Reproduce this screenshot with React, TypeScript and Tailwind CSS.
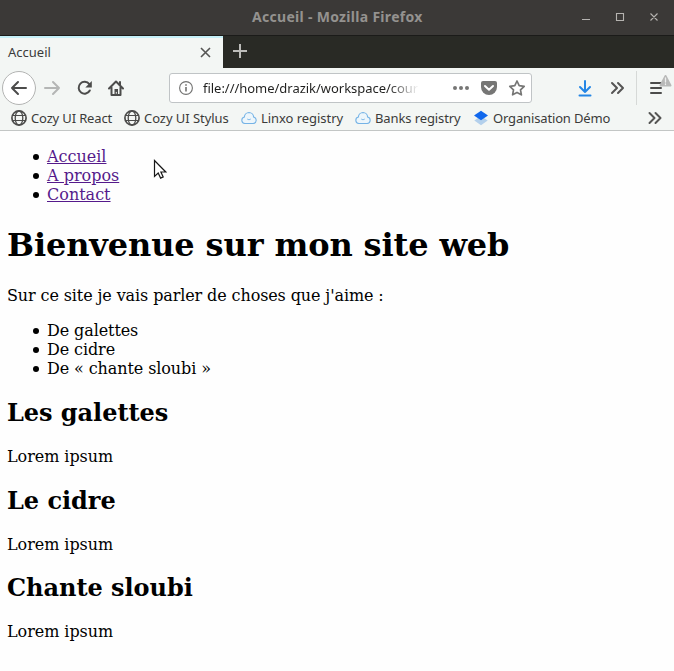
import type { ReactNode } from "react";

function Globe() {
  return (
    <svg width="16" height="16" viewBox="0 0 16 16" fill="none" stroke="#4c4c4b" className="shrink-0">
      <circle cx="8" cy="8" r="7.1" strokeWidth="1.7" />
      <ellipse cx="8" cy="8" rx="3.8" ry="7" strokeWidth="1.3" />
      <path d="M1.5 5.5h13M1.5 10.5h13" strokeWidth="1.2" />
    </svg>
  );
}

function Cloud() {
  return (
    <svg width="16" height="16" viewBox="0 0 16 16" fill="none" stroke="#75b3e6" strokeLinecap="round" className="shrink-0">
      <path d="M3.8 13.500a3.300 3.300 0 0 1-.4-6.500A4.700 4.700 0 0 1 8 2.500a4.700 4.700 0 0 1 4.600 4.500 3.300 3.300 0 0 1-.4 6.500z" fill="#edf6fb" strokeWidth="1.1" />
      <path d="M6.500 9.300q1.500 1.300 3 0" strokeWidth=".9" />
    </svg>
  );
}

function Layers() {
  return (
    <svg width="16" height="16" viewBox="0 0 16 16" className="shrink-0">
      <path d="M1.300 10.500 8 6l6.700 4.500L8 15.300z" fill="#b3d0ec" />
      <path d="M1 5.500 8 .8l7 4.700-7 4.800z" fill="#1168ed" />
    </svg>
  );
}

function Chevrons() {
  return (
    <svg width="14" height="14" viewBox="0 0 14 14" fill="none" stroke="#555554" strokeWidth="2" strokeLinecap="round" strokeLinejoin="round" className="shrink-0">
      <path d="m1.500 2 5 5-5 5M7.500 2l5 5-5 5" />
    </svg>
  );
}

function Bookmark({ icon, width, label }: { icon: ReactNode; width: string; label: ReactNode }) {
  return (
    <div className={`flex shrink-0 items-center gap-1 ${width}`}>
      {icon}
      {label}
    </div>
  );
}

function TitleBar() {
  return (
    <div className="flex h-[35px] items-center bg-[#3b3937]">
      <div className="w-[252px]" />
      <div className="w-[328px] pb-[2px] whitespace-nowrap text-[14px] font-bold tracking-[0.3px] text-[#94928f]">Accueil - Mozilla Firefox</div>
      <svg width="94" height="35" fill="none" stroke="#b5b3b0" strokeWidth="1.1">
        <path d="M2 19.500h8M36.500 13.500h7v7h-7zM70.500 13.500l7 7m0-7-7 7" />
      </svg>
    </div>
  );
}

function Tabs() {
  return (
    <div className="flex h-[33px] border-t border-[#1b1b19] bg-[#292a25]">
      <div className="flex h-8 w-[223px] items-center justify-between border-t-2 border-[#c5eff7] bg-[#f3f6f4] pr-3 pb-[2px] pl-2">
        <span className="pt-[2px] text-[13px]">Accueil</span>
        <svg width="11" height="11" viewBox="0 0 11 11" stroke="#555554" strokeWidth="1.6">
          <path d="m1 1 9 9m0-9-9 9" />
        </svg>
      </div>
      <svg width="34" height="31" stroke="#bcbcb9" strokeWidth="2">
        <path d="M10 15h14M17 8v14" />
      </svg>
    </div>
  );
}

function NavBar() {
  return (
    <div className="flex h-10 items-center bg-[#f3f6f4]">
      <svg width="169" height="40" fill="none" stroke="#4c4c4b" strokeWidth="2" strokeLinecap="round" strokeLinejoin="round" className="shrink-0">
        <circle cx="19" cy="20" r="16.500" fill="#fff" stroke="#b3b4b3" strokeWidth="1" />
        <path d="M26 20H12m6-6-6 6 6 6" />
        <path d="M45 20h14m-6-6 6 6-6 6" stroke="#b4b6b5" />
        <path d="M89.300 16.200A5.900 5.900 0 1 0 89.800 22.500" />
        <path d="M91.800 13v6.500h-6.500z" fill="#4c4c4b" stroke="none" />
        <path d="m109 20.500 7-7 7 7M111.500 19.500v7.500h9v-7.500M120 14v3" />
        <path d="M114.500 21h3.500v6h-3.500z" fill="#4c4c4b" stroke="none" />
        <path d="M116.300 24.300v1" stroke="#f3f6f4" strokeWidth="1" />
      </svg>
      <div className="flex h-[30px] w-[363px] shrink-0 items-center rounded-[3px] border border-[#c0c4c6] bg-white pl-[9px]">
        <svg width="14" height="14" viewBox="0 0 14 14" fill="none" stroke="#727271" className="shrink-0">
          <circle cx="7" cy="7" r="6.400" strokeWidth="1.100" />
          <path d="M7 6v4.500M7 3.300v1.500" strokeWidth="1.600" />
        </svg>
        <div className="mt-px ml-[10px] w-[216px] shrink-0 bg-linear-to-r from-[#20201f] from-86% to-transparent to-100% bg-clip-text text-[13px] tracking-[-0.03px] whitespace-nowrap text-transparent">file:///home/drazik/workspace/cour</div>
        <svg width="112" height="28" fill="#767675" className="shrink-0">
          <circle cx="36" cy="14" r="2" />
          <circle cx="42" cy="14" r="2" />
          <circle cx="48" cy="14" r="2" />
          <path d="M64 7h12a2 2 0 0 1 2 2v4a8 8 0 0 1-16 0V9a2 2 0 0 1 2-2" />
          <path d="m66 12 4 3.800 4-3.800" fill="none" stroke="#fff" strokeWidth="2" strokeLinecap="round" strokeLinejoin="round" />
          <path d="m98 7 2.200 4.600 5 .7-3.700 3.500.9 5-4.400-2.400-4.400 2.400.9-5-3.700-3.500 5-.7z" fill="none" stroke="#767675" strokeWidth="1.700" strokeLinejoin="round" />
        </svg>
      </div>
      <svg width="142" height="40" fill="none" stroke="#4c4c4b" strokeWidth="2" strokeLinecap="round" strokeLinejoin="round" className="shrink-0">
        <path d="M53 13v11m-5-5 5 5 5-5M47.500 27.500h11" stroke="#2486e5" />
        <path d="m80 15 5 5-5 5M86 15l5 5-5 5" stroke="#555554" />
        <path d="M104.500 3v34" stroke="#d6d9d7" strokeWidth="1" strokeLinecap="butt" />
        <path d="M119 15h10M119 20h10M119 25h10" />
        <path d="m133.500 8 5 9.500h-10z" fill="#b8b9b8" stroke="#b8b9b8" />
        <path d="M133.500 10v4m0 2v.5" stroke="#eeefee" strokeWidth="1.300" />
      </svg>
    </div>
  );
}

function Bookmarks() {
  return (
    <div className="flex h-[23px] items-center border-b border-[#c3c6c5] bg-[#f3f6f4] pb-[2px] pl-[11px] text-[13px] whitespace-nowrap">
      <Bookmark icon={<Globe />} width="w-[113px]" label={<span className="pt-[2px] tracking-[-0.15px]">Cozy UI React</span>} />
      <Bookmark icon={<Globe />} width="w-[117px]" label={<span className="pt-[2px] tracking-[-0.05px]">Cozy UI Stylus</span>} />
      <Bookmark icon={<Cloud />} width="w-[114px]" label={<span className="pt-[2px] tracking-[-0.05px]">Linxo registry</span>} />
      <Bookmark icon={<Cloud />} width="w-[118px]" label={<span className="pt-[2px] tracking-[-0.1px]">Banks registry</span>} />
      <Bookmark icon={<Layers />} width="w-[175px]" label={<span className="pt-[2px] tracking-[-0.15px]">Organisation Démo</span>} />
      <Chevrons />
    </div>
  );
}

function BulletItem({ children }: { children: ReactNode }) {
  return (
    <li className="flex items-center before:mr-2 before:ml-[26px] before:size-[6px] before:shrink-0 before:rounded-full before:bg-black before:content-['']">
      {children}
    </li>
  );
}

function Section({ title }: { title: string }) {
  return (
    <section>
      <h2 className="mt-[20.75px] text-2xl leading-7 font-bold tracking-[-0.04px]">{title}</h2>
      <p className="mt-5 leading-[19px] tracking-[-0.05px]">Lorem ipsum</p>
    </section>
  );
}

export default function App() {
  return (
    <div className="h-[671px] overflow-hidden bg-[#fefefe] font-['Noto_Sans',sans-serif] text-[#3b3b3a]">
      <TitleBar />
      <Tabs />
      <NavBar />
      <Bookmarks />
      <main className="relative pt-4 pl-[7px] font-['DejaVu_Serif',serif] text-base leading-[19px] text-black">
        <ul>
          {["Accueil", "A propos", "Contact"].map((item) => (
            <BulletItem key={item}>
              <a href="#" className="text-[#551a8b] underline">{item}</a>
            </BulletItem>
          ))}
        </ul>
        <h1 className="mt-[22px] text-[32px] leading-[38px] font-bold tracking-[-0.12px]">Bienvenue sur mon site web</h1>
        <p className="mt-[22px] tracking-[-0.11px]">Sur ce site je vais parler de choses que j'aime :</p>
        <ul className="mt-4 tracking-[-0.1px]">
          <BulletItem>De galettes</BulletItem>
          <BulletItem>De cidre</BulletItem>
          <BulletItem>De « chante sloubi »</BulletItem>
        </ul>
        <Section title="Les galettes" />
        <Section title="Le cidre" />
        <Section title="Chante sloubi" />
        <svg width="14" height="21" viewBox="0 0 14 21" className="absolute top-[28px] left-[153px]">
          <path d="M1.500 1.500v16l3.700-3.400 2.400 5 2.600-1.200-2.300-4.900h4.900z" fill="#fff" stroke="#171717" strokeWidth="1.200" />
        </svg>
      </main>
    </div>
  );
}
